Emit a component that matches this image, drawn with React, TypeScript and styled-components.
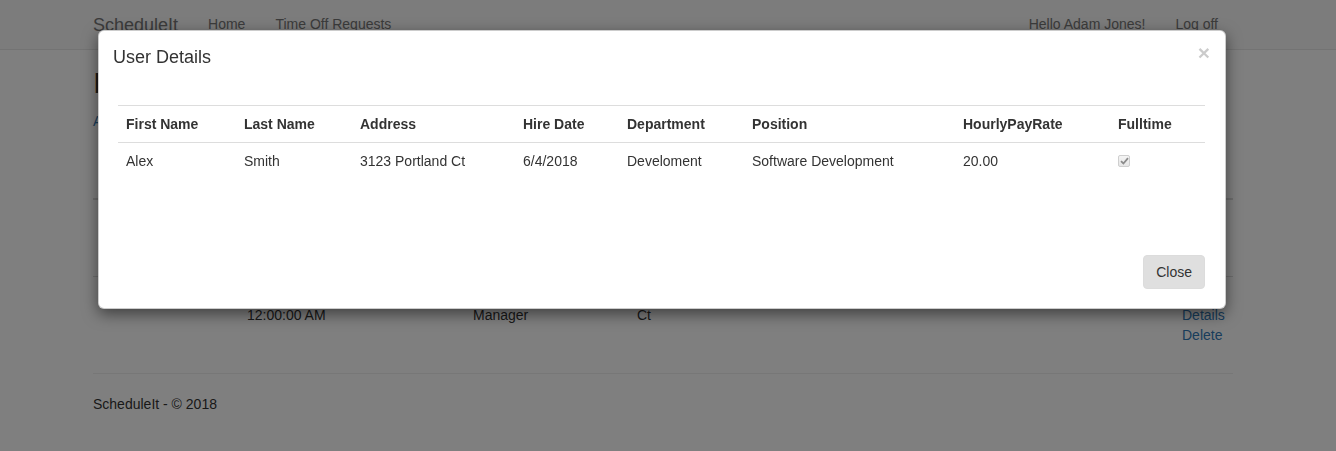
import React from "react";
import styled, { createGlobalStyle } from "styled-components";

const Global = createGlobalStyle`
  * { box-sizing: border-box; }
  html, body { margin: 0; padding: 0; }
  body {
    font-family: "Liberation Sans", Arial, Helvetica, sans-serif;
    font-size: 14px;
    line-height: 20px;
    color: #333;
    background: #fff;
  }
`;

const Page = styled.div`
  position: relative;
  min-height: 451px;
`;

const Navbar = styled.nav`
  height: 50px;
  background: #f8f8f8;
  border-bottom: 1px solid #e7e7e7;
`;

const Container = styled.div`
  width: 1170px;
  margin-left: 78px;
  padding: 0 15px;
`;

const NavInner = styled(Container)`
  display: flex;
  align-items: center;
  height: 49px;
`;

const Brand = styled.a`
  font-size: 18px;
  color: #777;
  text-decoration: none;
  padding-right: 15px;
  line-height: 20px;
`;

const NavLink = styled.a`
  color: #777;
  text-decoration: none;
  padding: 0 15px;
  line-height: 20px;
  margin-top: -1px;
`;

const NavRight = styled.div`
  margin-left: auto;
  display: flex;
`;

const Main = styled(Container)``;

const Heading = styled.h2`
  font-size: 30px;
  font-weight: 500;
  line-height: 33px;
  margin: 16px 0 12px;
`;

const Para = styled.p`
  margin: 0 0 11px;
`;

const Link = styled.a`
  color: #337ab7;
  text-decoration: none;
`;

const BgTable = styled.table`
  width: 100%;
  border-collapse: collapse;
  table-layout: fixed;
  margin-bottom: 20px;
  th, td {
    padding: 8px;
    text-align: left;
    vertical-align: top;
    line-height: 20px;
  }
  th { border-bottom: 2px solid #ddd; }
  td { border-top: 1px solid #ddd; }
`;

const LinkStack = styled.div`
  display: flex;
  flex-direction: column;
`;

const Rule = styled.hr`
  margin: 0 0 20px;
  border: 0;
  border-top: 1px solid #eee;
`;

const Footer = styled.footer`
  margin: 0;
`;

const Backdrop = styled.div`
  position: fixed;
  inset: 0;
  background: rgba(0, 0, 0, 0.5);
`;

const Modal = styled.div`
  position: absolute;
  top: 30px;
  left: 98px;
  width: 1128px;
  background: #fff;
  border: 1px solid rgba(0, 0, 0, 0.2);
  border-radius: 6px;
  box-shadow: 0 5px 15px rgba(0, 0, 0, 0.5);
`;

const ModalHeader = styled.div`
  display: flex;
  justify-content: space-between;
  align-items: flex-start;
  padding: 14px 15px 16px 14px;
`;

const ModalTitle = styled.h4`
  margin: 0;
  font-size: 18px;
  font-weight: 500;
  line-height: 24px;
  color: #333;
`;

const CloseX = styled.button`
  border: 0;
  background: transparent;
  padding: 0;
  margin-top: -3px;
  font-family: "Liberation Sans", Arial, sans-serif;
  font-size: 21px;
  font-weight: 700;
  line-height: 1;
  color: #000;
  opacity: 0.2;
  text-shadow: 0 1px 0 #fff;
  cursor: pointer;
`;

const ModalBody = styled.div`
  padding: 20px 20px 36px 19px;
`;

const DetailTable = styled.table`
  width: 100%;
  border-collapse: collapse;
  table-layout: fixed;
  margin-bottom: 20px;
  th, td {
    padding: 8px;
    text-align: left;
    line-height: 20px;
    vertical-align: top;
  }
  th {
    font-weight: 700;
    border-top: 1px solid #ddd;
    border-bottom: 1px solid #ddd;
  }
`;

const CheckBox = styled.span`
  display: inline-flex;
  align-items: center;
  justify-content: center;
  width: 12px;
  height: 12px;
  margin-top: 4px;
  border: 1px solid #cfcfcf;
  border-radius: 2px;
  background: linear-gradient(#f4f4f4, #e6e6e6);
  vertical-align: top;
`;

const ModalFooter = styled.div`
  display: flex;
  justify-content: flex-end;
  padding: 20px 20px 19px;
`;

const Button = styled.button`
  font-family: "Liberation Sans", Arial, sans-serif;
  font-size: 14px;
  line-height: 20px;
  padding: 6px 12px;
  color: #333;
  background: #dfdfdf;
  border: 1px solid #dcdcdc;
  border-radius: 4px;
  cursor: pointer;
`;

const cols = [118, 116, 163, 104, 125, 211, 155];

export default function App() {
  return (
    <Page>
      <Global />
      <Navbar>
        <NavInner>
          <Brand href="#">ScheduleIt</Brand>
          <NavLink href="#">Home</NavLink>
          <NavLink href="#">Time Off Requests</NavLink>
          <NavRight>
            <NavLink href="#">Hello Adam Jones!</NavLink>
            <NavLink href="#">Log off</NavLink>
          </NavRight>
        </NavInner>
      </Navbar>
      <Main>
        <Heading>Index</Heading>
        <Para>
          <Link href="#">Add New Employee</Link>
        </Para>
        <BgTable>
          <colgroup>
            <col style={{ width: 146 }} />
            <col style={{ width: 226 }} />
            <col style={{ width: 164 }} />
            <col style={{ width: 545 }} />
            <col />
          </colgroup>
          <thead>
            <tr>
              <th>First<br />Name</th>
              <th>Hire Date</th>
              <th>Position</th>
              <th>Address</th>
              <th></th>
            </tr>
          </thead>
          <tbody>
            <tr>
              <td>Adam</td>
              <td>6/1/2018<br />12:00:00 AM</td>
              <td>Department<br />Manager</td>
              <td>100 Main<br />St</td>
              <td>
                <LinkStack>
                  <Link href="#">Edit</Link>
                  <Link href="#">Details</Link>
                  <Link href="#">Delete</Link>
                </LinkStack>
              </td>
            </tr>
            <tr>
              <td>Alex</td>
              <td>6/4/2018<br />12:00:00 AM</td>
              <td>Development<br />Manager</td>
              <td>3123 Portland<br />Ct</td>
              <td>
                <LinkStack>
                  <Link href="#">Edit</Link>
                  <Link href="#">Details</Link>
                  <Link href="#">Delete</Link>
                </LinkStack>
              </td>
            </tr>
          </tbody>
        </BgTable>
        <Rule />
        <Footer>ScheduleIt - © 2018</Footer>
      </Main>

      <Backdrop />
      <Modal role="dialog" aria-label="User Details">
        <ModalHeader>
          <ModalTitle>User Details</ModalTitle>
          <CloseX aria-label="Close">×</CloseX>
        </ModalHeader>
        <ModalBody>
          <DetailTable>
            <colgroup>
              {cols.map((w, i) => (
                <col key={i} style={{ width: w }} />
              ))}
              <col />
            </colgroup>
            <thead>
              <tr>
                <th>First Name</th>
                <th>Last Name</th>
                <th>Address</th>
                <th>Hire Date</th>
                <th>Department</th>
                <th>Position</th>
                <th>HourlyPayRate</th>
                <th>Fulltime</th>
              </tr>
            </thead>
            <tbody>
              <tr>
                <td>Alex</td>
                <td>Smith</td>
                <td>3123 Portland Ct</td>
                <td>6/4/2018</td>
                <td>Develoment</td>
                <td>Software Development</td>
                <td>20.00</td>
                <td>
                  <CheckBox role="checkbox" aria-checked="true" aria-disabled="true">
                    <svg width="9" height="8" viewBox="0 0 9 8">
                      <path d="M1 4.2 L3.4 6.5 L8 1.2" fill="none" stroke="#8c8c8c" strokeWidth="1.8" />
                    </svg>
                  </CheckBox>
                </td>
              </tr>
            </tbody>
          </DetailTable>
        </ModalBody>
        <ModalFooter>
          <Button>Close</Button>
        </ModalFooter>
      </Modal>
    </Page>
  );
}
